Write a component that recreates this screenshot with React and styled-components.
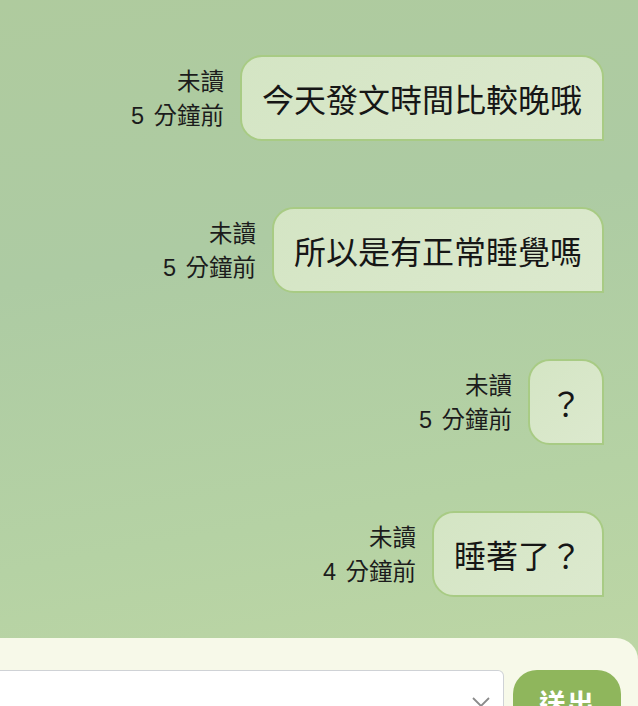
import React from "react";
import styled, { createGlobalStyle } from "styled-components";

const Global = createGlobalStyle`
  html, body { margin: 0; padding: 0; }
  body {
    width: 638px;
    height: 706px;
    overflow: hidden;
    font-family: "Noto Sans CJK TC", "Noto Sans", sans-serif;
  }
`;

const Page = styled.div`
  width: 638px;
  height: 706px;
  display: flex;
  flex-direction: column;
  background: linear-gradient(170deg, #afcb9e 0%, #adcba3 35%, #b5d2a4 70%, #bfd7a5 100%);
  overflow: hidden;
`;

const Messages = styled.div`
  flex: 0 0 638px;
  box-sizing: border-box;
  display: flex;
  flex-direction: column;
  align-items: flex-end;
  gap: 66px;
  padding: 55px 34px 0 0;
`;

const Row = styled.div`
  display: flex;
  align-items: center;
  gap: 16px;
`;

const Meta = styled.div`
  display: flex;
  flex-direction: column;
  align-items: flex-end;
  font-family: "Liberation Sans", "Noto Sans CJK TC", sans-serif;
  font-size: 23.5px;
  line-height: 34px;
  color: #1c1c1c;
  padding-top: 2px;
  word-spacing: 3px;
`;

const Bubble = styled.div`
  box-sizing: border-box;
  height: 86px;
  padding: 0 20px;
  display: flex;
  align-items: center;
  font-size: 32px;
  color: #161616;
  background: linear-gradient(135deg, #d4e5c4 0%, #dce9ce 100%);
  border: 2px solid #a8cb84;
  border-radius: 22px 22px 0 22px;
  white-space: nowrap;
`;

const Composer = styled.div`
  flex: 0 0 68px;
  box-sizing: border-box;
  background: #f7f9e9;
  border-top-right-radius: 22px;
  display: flex;
  align-items: flex-start;
  gap: 9px;
  padding: 32px 17px 0 0;
`;

const Select = styled.div`
  position: relative;
  flex: 1;
  height: 60px;
  background: #ffffff;
  border: 1.5px solid #cfd2d6;
  border-left: none;
  border-radius: 0 6px 0 0;
`;

const Chevron = styled.svg`
  position: absolute;
  right: 13px;
  top: 26px;
`;

const SendButton = styled.button`
  flex: 0 0 108px;
  height: 64px;
  border: none;
  border-radius: 24px;
  background: #8fb65c;
  color: #ffffff;
  font-family: "Noto Sans CJK TC", sans-serif;
  font-weight: 700;
  font-size: 27px;
  line-height: 1;
  display: flex;
  justify-content: center;
  align-items: flex-start;
  padding: 19px 0 0;
  letter-spacing: 1px;
`;

const messages = [
  { text: "今天發文時間比較晚哦", time: "5 分鐘前" },
  { text: "所以是有正常睡覺嗎", time: "5 分鐘前" },
  { text: "？", time: "5 分鐘前" },
  { text: "睡著了？", time: "4 分鐘前" },
];

export default function App() {
  return (
    <>
      <Global />
      <Page>
        <Messages>
          {messages.map((m, i) => (
            <Row key={i}>
              <Meta>
                <span>未讀</span>
                <span>{m.time}</span>
              </Meta>
              <Bubble>{m.text}</Bubble>
            </Row>
          ))}
        </Messages>
        <Composer>
          <Select>
            <Chevron width="18" height="10" viewBox="0 0 18 10">
              <path d="M1 1 L9 9 L17 1" fill="none" stroke="#8a8a8a" strokeWidth="1.8" />
            </Chevron>
          </Select>
          <SendButton>送出</SendButton>
        </Composer>
      </Page>
    </>
  );
}
